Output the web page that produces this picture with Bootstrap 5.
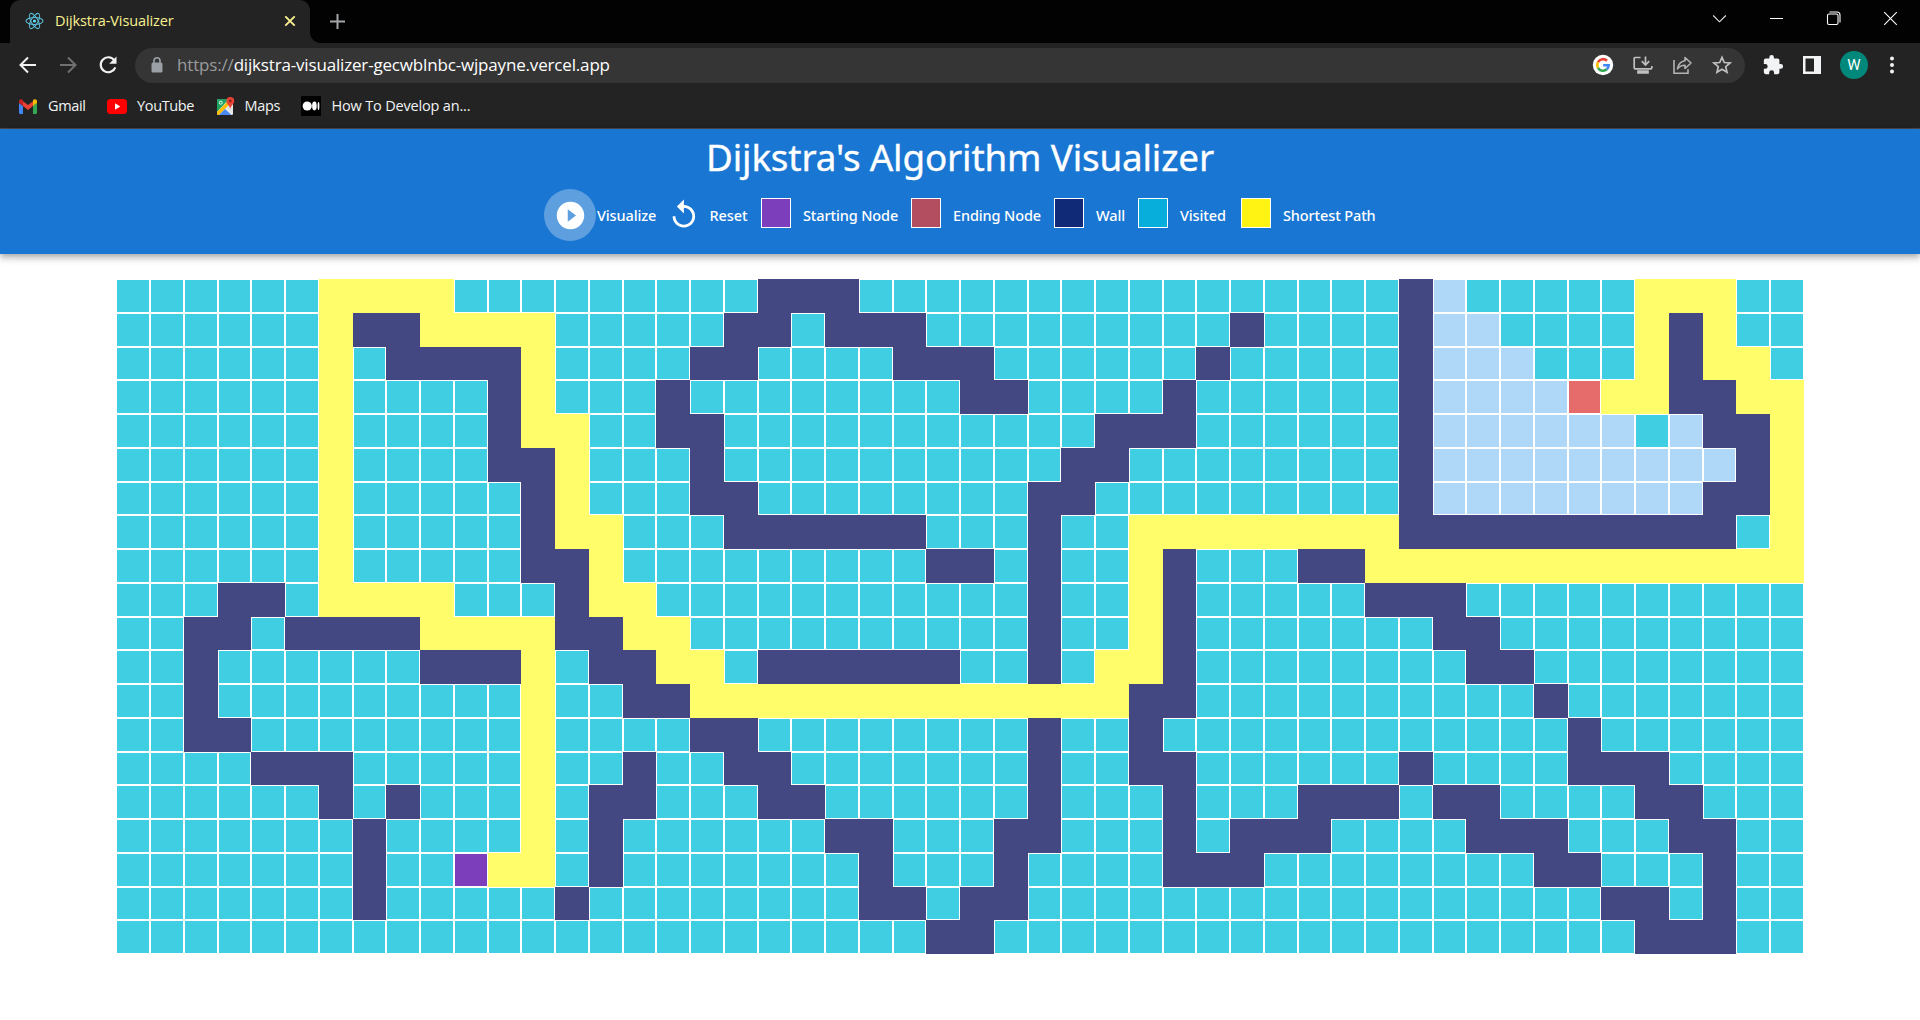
<!DOCTYPE html>
<html lang="en">
<head>
<meta charset="utf-8">
<meta name="viewport" content="width=device-width, initial-scale=1">
<title>Dijkstra-Visualizer</title>
<link href="https://cdn.jsdelivr.net/npm/bootstrap@5.3.0/dist/css/bootstrap.min.css" rel="stylesheet">
<style>
body{background:#fff;font-family:"Open Sans","Noto Sans",sans-serif;height:1020px;overflow:hidden}
svg{display:block;flex:none}
.ui-text{white-space:nowrap;line-height:20px;color:#f1f3f4}
.tab-strip{height:43px;background:#020202;padding-left:10px;padding-right:22px}
.tab-active{width:300px;height:43px;background:#232323;border-radius:10px 10px 0 0;padding:0 14px 2px 15px}
.tab-active .ui-text{color:#f8f190;font-size:14.5px;letter-spacing:-.1px;margin-left:11px}
.tab-foot{width:10px;height:10px;background:radial-gradient(circle at 100% 0,#020202 9.5px,#232323 10px)}
.tab-plus{margin-left:10px;margin-bottom:1px}
.window-controls{gap:42px;margin-bottom:6px}
.toolbar-row{height:44px;background:#232323;padding:0 23px 0 19px}
.nav-icons{gap:22px;width:116px}
.omni{width:1610px;height:35px;border-radius:18px;background:#353535;padding:0 13px 0 16px}
.omni .ui-text{font-size:17px;letter-spacing:-.17px;color:#fff}
.omni .scheme{color:#9a9b9d;margin-left:14px}
.omni-actions{gap:18px}
.tool-actions{gap:15px}
.bookmarks{height:42px;background:#232323;border-bottom:1px solid #4c4a48;padding-left:18px}
.bookmarks .ui-text{font-size:14.5px;letter-spacing:-.35px;margin-left:10px}
.bookmarks .long-title{letter-spacing:-.17px}
.bm-item{height:38px;margin-right:21.4px}
.avatar{width:28px;height:28px;background:#00897b;color:#fff;font:15px/28px Roboto,sans-serif}
.app-bar{height:125px;background:#1976d2;color:#fff;box-shadow:0 2px 5px -1px rgba(0,0,0,.2),0 5px 6px rgba(0,0,0,.14),0 1px 12px rgba(0,0,0,.12)}
.app-bar h1{font-family:"Noto Sans",sans-serif;font-size:36.8px;letter-spacing:-.16px;font-weight:400;line-height:56px;height:60px;-webkit-text-stroke:.35px #fff}
.legend-text{font-family:"Noto Sans",sans-serif;font-weight:500;font-size:14.5px;letter-spacing:-.12px;line-height:20px;white-space:nowrap;padding-left:12px;flex:none}
.lt-visualize{width:70.3px;padding-left:.5px}
.lt-reset{width:60.5px;padding-left:9px}
.lt-start{width:120px}
.lt-end{width:113px}
.lt-wall{width:54px}
.lt-visited{width:73px}
.lt-path{width:104.5px}
.swatch{width:30px;height:30px;border:1px solid #fff;flex:none;margin-bottom:5px}
.play-btn{width:52px;height:52px;background:#5e9fe0}
.sw-start{background:#7d3ebb}
.sw-end{background:#b34e61}
.sw-wall{background:#112a77}
.sw-visited{background:#07addb}
.sw-path{background:#fff314}
.board{width:1687.5px;margin:25px auto 0}
.cell{width:33.75px;height:33.75px;border:1px solid #fff;flex:none;background:#40cee3}
.cell-W{background:#444882;border-color:#444882}
.cell-P{background:#fffe6a;border-color:#fffe6a}
.cell-U{background:#afd7f8}
.cell-S{background:#7d3ebb}
.cell-E{background:#e66c6c}
</style>
</head>
<body>
<div class="tab-strip d-flex align-items-center">
  <div class="tab-active d-flex align-items-center">
    <svg width="19" height="20" viewBox="-10 -10 20 20" fill="none" stroke="#5bbdd6" stroke-width="1.1"><circle r="1.7" fill="#61dafb" stroke="none"/><ellipse rx="9" ry="3.6"/><ellipse rx="9" ry="3.6" transform="rotate(60)"/><ellipse rx="9" ry="3.6" transform="rotate(120)"/></svg>
    <span class="ui-text">Dijkstra-Visualizer</span>
    <svg class="ms-auto" width="12" height="12" viewBox="0 0 12 12" stroke="#f8f190" stroke-width="1.9"><path d="M1.3 1.3l9.4 9.4M10.7 1.3l-9.4 9.4"/></svg>
  </div>
  <div class="tab-foot align-self-end"></div>
  <svg class="tab-plus" width="15" height="15" viewBox="0 0 15 15" stroke="#a3a5a8" stroke-width="2"><path d="M7.500 0v15M0 7.500h15"/></svg>
  <div class="window-controls d-flex align-items-center ms-auto">
    <svg width="15" height="15" viewBox="0 0 15 15" fill="none" stroke="#e8e8e8" stroke-width="1.1"><path d="M1.200 4.500l6.300 6.300 6.300-6.300"/></svg>
    <svg width="15" height="15" viewBox="0 0 15 15" stroke="#fff" stroke-width="1"><path d="M1 7.500h13"/></svg>
    <svg width="15" height="15" viewBox="0 0 15 15" fill="none" stroke="#fff" stroke-width="1.1"><rect x="1.500" y="3" width="10.500" height="10.500" rx="1.500"/><path d="M3.500 1h7.500q3 0 3 3v7.500"/></svg>
    <svg width="15" height="15" viewBox="0 0 15 15" stroke="#fff" stroke-width="1.1"><path d="M1.200 1.200l12.600 12.600M13.800 1.200L1.200 13.800"/></svg>
  </div>
</div>

<div class="toolbar-row d-flex align-items-center">
  <div class="nav-icons d-flex align-items-center">
    <svg width="18" height="18" viewBox="0 0 18 18" fill="none" stroke="#f1f1f1" stroke-width="2"><path d="M17 9H2M9 1.500L1.500 9 9 16.500"/></svg>
    <svg width="18" height="18" viewBox="0 0 18 18" fill="none" stroke="#707070" stroke-width="2"><path d="M1 9h15M9 1.500L16.500 9 9 16.500"/></svg>
    <svg width="19" height="20" viewBox="1 0 19 20"><path d="M16.300 5.300A7.500 7.500 0 1 0 17.300 12.300" fill="none" stroke="#f1f1f1" stroke-width="2.200"/><path d="M18.500 1.500v7.300h-7.300z" fill="#f1f1f1"/></svg>
  </div>
  <div class="omni d-flex align-items-center">
    <svg width="12" height="16" viewBox="0 0 12 16"><rect x=".5" y="5.500" width="11" height="10" rx="1.500" fill="#9aa0a6"/><path d="M3 6V3.800a3 3 0 0 1 6 0V6" fill="none" stroke="#9aa0a6" stroke-width="1.600"/></svg>
    <span class="ui-text scheme">https://</span><span class="ui-text">dijkstra-visualizer-gecwblnbc-wjpayne.vercel.app</span>
    <div class="omni-actions d-flex align-items-center ms-auto">
      <svg width="22" height="22" viewBox="0 0 22 22" fill="none" stroke-width="2.600"><circle cx="11" cy="11" r="10.200" fill="#fff"/><path d="M15 6.800A5.700 5.700 0 0 0 6 8.200" stroke="#ea4335"/><path d="M6 8.200a5.700 5.700 0 0 0 0 5.600" stroke="#fbbc05"/><path d="M6 13.800a5.700 5.700 0 0 0 8.800 1.500" stroke="#34a853"/><path d="M14.800 15.300A5.700 5.700 0 0 0 16.700 11.300H11.200" stroke="#4285f4"/></svg>
      <svg width="22" height="20" viewBox="0 0 22 20" fill="none" stroke="#c0c0c0" stroke-width="1.700"><path d="M8.500 2.500H3.200q-1 0-1 1v9.300q0 1 1 1h15.600q1 0 1-1V11M13.500 1.500v8M9.800 6.200l3.700 3.800 3.700-3.800"/><path d="M6 16h10v2H6z" fill="#c0c0c0"/></svg>
      <svg width="22" height="20" viewBox="0 0 22 20" fill="none" stroke="#b4b4b4" stroke-width="1.600"><path d="M2 5v13.200h14v-4"/><path d="M13 2.500l6 5.500-6 5.500v-3.200c-3.500 0-5.500 1-7.500 3.500.7-4.500 3-7.300 7.500-8z" stroke-linejoin="round"/></svg>
      <svg width="20" height="20" viewBox="0 0 20 20" fill="none" stroke="#c0c0c0" stroke-width="1.700"><path d="M10 2.300l2.300 5.200 5.700.5-4.300 3.700 1.300 5.500-5-3-5 3 1.300-5.500L2 8l5.700-.5z"/></svg>
    </div>
  </div>
  <div class="tool-actions d-flex align-items-center ms-auto">
    <svg width="22" height="22" viewBox="0 0 24 24" fill="#f1f3f4"><path d="M20.500 11H19V7a2 2 0 0 0-2-2h-4V3.500a2.500 2.500 0 0 0-5 0V5H4a2 2 0 0 0-2 2v3.800h1.500a2.700 2.700 0 0 1 0 5.400H2V20a2 2 0 0 0 2 2h3.800v-1.500a2.700 2.700 0 0 1 5.400 0V22H17a2 2 0 0 0 2-2v-4h1.500a2.500 2.500 0 0 0 0-5z"/></svg>
    <svg class="ms-1" width="18" height="18" viewBox="0 0 18 18"><path fill="#f1f3f4" fill-rule="evenodd" d="M0 0h18v18H0zM2.500 2.500v13H11v-13z"/></svg>
    <div class="avatar rounded-circle text-center mx-1">W</div>
    <svg width="10" height="18" viewBox="0 0 10 18" fill="#f1f3f4"><circle cx="5" cy="2.500" r="2"/><circle cx="5" cy="9" r="2"/><circle cx="5" cy="15.500" r="2"/></svg>
  </div>
</div>

<div class="bookmarks d-flex">
  <div class="bm-item d-flex align-items-center">
    <svg width="20" height="15" viewBox="0 0 20 15"><path fill="#4285f4" d="M1 4l4 3v8H2.300Q1 15 1 13.700z"/><path fill="#34a853" d="M15 7l4-3v9.700q0 1.300-1.300 1.300H15z"/><path fill="#ea4335" d="M5 2.200l5 3.900 5-3.900v4.900l-5 3.900-5-3.900z"/><path fill="#c5221f" d="M1 2.500C1 .4 3-.5 5 1v6.100L1 4z"/><path fill="#fbbc04" d="M19 2.500C19 .4 17-.5 15 1v6.100L19 4z"/></svg>
    <span class="ui-text">Gmail</span>
  </div>
  <div class="bm-item d-flex align-items-center">
    <svg width="20" height="15" viewBox="0 0 20 15"><rect width="20" height="15" rx="3.500" fill="#f00"/><path fill="#fff" d="M8 4.300l5.300 3.200L8 10.700z"/></svg>
    <span class="ui-text">YouTube</span>
  </div>
  <div class="bm-item d-flex align-items-center">
    <svg width="19" height="19" viewBox="0 0 19 19"><rect x="1" y="2" width="16" height="16" rx="1.500" fill="#e8eaed"/><path fill="#1ea362" d="M1 3.500Q1 2 2.500 2H13L1 15z"/><path fill="#fbbc04" d="M1 15L13 3l2 3L3 18H2.500Q1 18 1 16.500z"/><path fill="#4a89f3" d="M9 12l6.500 6H3z"/><path fill="#e5e5e5" d="M10 11l7-5v11z"/><path fill="#ea4335" d="M14.300 0a3.900 3.900 0 0 1 3.900 3.900c0 3-3 4-3.900 8-.9-4-3.900-5-3.900-8A3.900 3.900 0 0 1 14.300 0z"/><circle cx="14.300" cy="3.900" r="1.300" fill="#7b231c"/><circle cx="4.800" cy="5.700" r="1.500" fill="none" stroke="#fff" stroke-width=".9"/></svg>
    <span class="ui-text">Maps</span>
  </div>
  <div class="bm-item d-flex align-items-center">
    <svg width="20" height="20" viewBox="0 0 20 20"><rect width="20" height="20" rx="1" fill="#000"/><circle cx="6.200" cy="10" r="4.600" fill="#fff"/><ellipse cx="13.400" cy="10" rx="2.300" ry="4.400" fill="#fff"/><ellipse cx="17.500" cy="10" rx=".9" ry="3.900" fill="#fff"/></svg>
    <span class="ui-text long-title">How To Develop an...</span>
  </div>
</div>

<header class="app-bar">
  <h1 class="text-center text-nowrap mb-0">Dijkstra's Algorithm Visualizer</h1>
  <div class="d-flex justify-content-center align-items-center">
    <div class="play-btn rounded-circle d-flex align-items-center justify-content-center flex-shrink-0">
      <svg width="33" height="33" viewBox="0 0 24 24" fill="#fff"><path d="M12 2C6.480 2 2 6.480 2 12s4.480 10 10 10 10-4.480 10-10S17.520 2 12 2zm-2 14.500v-9l6 4.500-6 4.500z"/></svg>
    </div>
    <span class="legend-text lt-visualize">Visualize</span>
    <svg width="33.750" height="33.750" viewBox="0 0 24 24" fill="#fff"><path d="M12 5V1L7 6l5 5V7c3.310 0 6 2.690 6 6s-2.690 6-6 6-6-2.690-6-6H4c0 4.420 3.580 8 8 8s8-3.580 8-8-3.580-8-8-8z"/></svg>
    <span class="legend-text lt-reset">Reset</span>
    <span class="swatch sw-start"></span><span class="legend-text lt-start">Starting Node</span>
    <span class="swatch sw-end"></span><span class="legend-text lt-end">Ending Node</span>
    <span class="swatch sw-wall"></span><span class="legend-text lt-wall">Wall</span>
    <span class="swatch sw-visited"></span><span class="legend-text lt-visited">Visited</span>
    <span class="swatch sw-path"></span><span class="legend-text lt-path">Shortest Path</span>
  </div>
</header>

<main class="board" id="board"></main>

<script>
// Each row lists runs of cells by kind and column: W wall, P shortest path,
// U unvisited, S start, E end. Every other cell has been visited.
const rows = [
  'P6-9 W19-21 W38 U39 P45-47',
  'P6 W7-8 P9-12 W18-19 W21-23 W33 W38 U39-40 P45 W46 P47',
  'P6 W8-11 P12 W17-18 W23-25 W32 W38 U39-41 P45 W46 P47-48',
  'P6 W11 P12 W16 W25-26 W31 W38 U39-42 E43 P44-45 W46-47 P48-49',
  'P6 W11 P12-13 W16-17 W29-31 W38 U39-44 U46 W47-48 P49',
  'P6 W11-12 P13 W17 W28-29 W38 U39-47 W48 P49',
  'P6 W12 P13 W17-18 W27-28 W38 U39-46 W47-48 P49',
  'P6 W12 P13-14 W18-23 W27 P30-37 W38-47 P49',
  'P6 W12-13 P14 W24-25 W27 P30 W31 W35-36 P37-49',
  'W3-4 P6-9 W13 P14-15 W27 P30 W31 W37-39',
  'W2-3 W5-8 P9-12 W13-14 P15-16 W27 P30 W31 W39-40',
  'W2 W9-11 P12 W14-15 P16-17 W19-24 W27 P29-30 W31 W40-41',
  'W2 P12 W15-16 P17-29 W30-31 W42',
  'W2-3 P12 W17-18 W27 W30 W43',
  'W4-6 P12 W15 W18-19 W27 W30-31 W38 W43-45',
  'W6 W8 P12 W14-15 W19-20 W27 W31 W35-37 W39-40 W45-46',
  'W7 P12 W14 W21-22 W26-27 W31 W33-35 W40-42 W46-47',
  'W7 S10 P11-12 W14 W22 W26 W31-33 W42-43 W47',
  'W7 W13 W22-23 W25-26 W44-45 W47',
  'W24-25 W45-47'
];
const board = document.getElementById('board');
for (const row of rows) {
  const kinds = Array(50).fill('V');
  for (const run of row.split(' ')) {
    const [from, to = from] = run.slice(1).split('-').map(Number);
    kinds.fill(run[0], from, to + 1);
  }
  const line = document.createElement('div');
  line.className = 'd-flex';
  for (const kind of kinds) {
    const cell = document.createElement('div');
    cell.className = 'cell cell-' + kind;
    line.append(cell);
  }
  board.append(line);
}
</script>
<script src="https://cdn.jsdelivr.net/npm/bootstrap@5.3.0/dist/js/bootstrap.bundle.min.js"></script>
</body>
</html>
